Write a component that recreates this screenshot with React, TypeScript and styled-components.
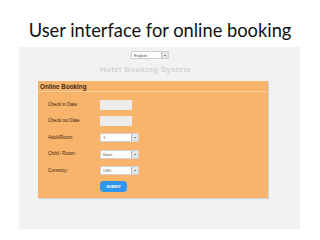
import * as React from "react";
import styled, { createGlobalStyle } from "styled-components";

const GlobalStyle = createGlobalStyle`
  html, body {
    margin: 0;
    padding: 0;
    background: #ffffff;
  }
  body {
    width: 320px;
    height: 240px;
    overflow: hidden;
    font-family: "Liberation Sans", Arial, sans-serif;
  }
`;

const Slide = styled.div`
  width: 320px;
  height: 240px;
  display: flex;
  flex-direction: column;
`;

const Title = styled.h1`
  margin: 0;
  padding-top: 19px;
  height: 28px;
  text-align: center;
  font-family: Lato, "Open Sans", sans-serif;
  font-weight: 400;
  font-size: 18.3px;
  line-height: 22px;
  color: #111111;
`;

const Panel = styled.div`
  margin: 0 20px 0 19px;
  height: 182px;
  background: #f2f2f2;
  display: flex;
  flex-direction: column;
`;

const LangRow = styled.div`
  display: flex;
  padding: 4px 0 0 112px;
`;

const Brand = styled.div`
  padding: 4px 0 0 81px;
  height: 14px;
  font-size: 8px;
  line-height: 14px;
  font-weight: 700;
  letter-spacing: 0.3px;
  color: #d2d2d2;
`;

const Card = styled.section`
  margin: 4px 0 0 19px;
  width: 230px;
  height: 117px;
  background: #f9b46b;
  box-shadow: 1px 1px 1px rgba(0, 0, 0, 0.12);
  display: flex;
  flex-direction: column;
`;

const CardHeader = styled.div`
  height: 10px;
  padding-left: 2px;
  border-bottom: 1px solid #fbcd98;
  font-size: 6.3px;
  line-height: 12px;
  font-weight: 700;
  color: #3a2a18;
`;

const Form = styled.div`
  padding: 8px 0 0 10px;
  display: grid;
  grid-template-columns: 52px auto;
  grid-auto-rows: 10px;
  row-gap: 6.4px;
  align-items: center;
`;

const Label = styled.span`
  font-size: 4.6px;
  color: #3a2410;
  line-height: 10px;
`;

const DateBox = styled.div`
  width: 32px;
  height: 10px;
  background: #ececec;
  border-radius: 1px;
`;

const Select = styled.div<{ $width: number }>`
  width: ${(p) => p.$width}px;
  height: 9px;
  display: flex;
  background: #ffffff;
  border: 0.5px solid #d0d0d0;
  box-sizing: border-box;
`;

const SelectText = styled.span`
  flex: 1;
  padding-left: 2px;
  font-size: 4px;
  line-height: 8px;
  color: #555555;
`;

const Arrow = styled.span`
  width: 6px;
  display: flex;
  align-items: center;
  justify-content: center;
  background: #e6e6e6;
  border-left: 0.5px solid #b8b8b8;
  &::after {
    content: "";
    border-left: 1.3px solid transparent;
    border-right: 1.3px solid transparent;
    border-top: 1.6px solid #222;
  }
`;

const Submit = styled.button`
  width: 27px;
  height: 11px;
  padding: 0;
  border: none;
  border-radius: 4px;
  background: #2f97f0;
  color: #ffffff;
  font-family: "Liberation Sans", Arial, sans-serif;
  font-size: 3.8px;
  font-weight: 700;
`;

const LangSelect = styled(Select)`
  height: 8px;
`;

const rows: [string, React.ReactNode][] = [
  ["Check in Date:", <DateBox />],
  ["Check out Date:", <DateBox />],
  ["Adult/Room:", <Select $width={39}><SelectText>1</SelectText><Arrow /></Select>],
  ["Child / Room:", <Select $width={39}><SelectText>None</SelectText><Arrow /></Select>],
  ["Currency:", <Select $width={39}><SelectText>USD</SelectText><Arrow /></Select>],
];

export default function App() {
  return (
    <Slide>
      <GlobalStyle />
      <Title>User interface for online booking</Title>
      <Panel>
        <LangRow>
          <LangSelect $width={38}>
            <SelectText>English</SelectText>
            <Arrow />
          </LangSelect>
        </LangRow>
        <Brand>Hotel Booking System</Brand>
        <Card>
          <CardHeader>Online Booking</CardHeader>
          <Form>
            {rows.map(([label, control]) => (
              <React.Fragment key={label}>
                <Label>{label}</Label>
                {control}
              </React.Fragment>
            ))}
            <span />
            <Submit>SUBMIT</Submit>
          </Form>
        </Card>
      </Panel>
    </Slide>
  );
}
